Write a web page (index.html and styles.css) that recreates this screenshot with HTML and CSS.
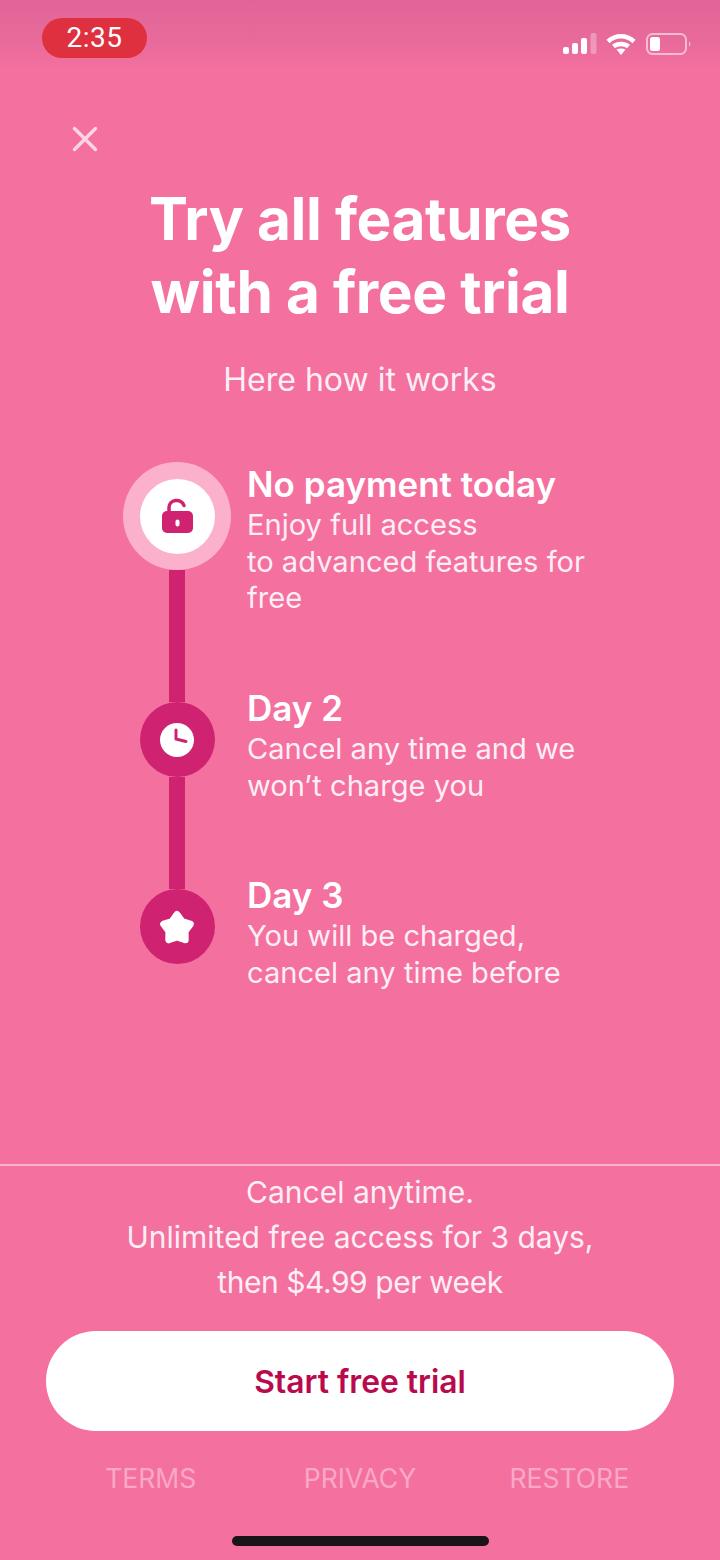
FILE: index.html
```html
<!DOCTYPE html>
<html lang="en">
<head>
<meta charset="utf-8">
<title>Free trial</title>
<link rel="stylesheet" href="styles.css">
</head>
<body>
<main class="page">
  <header class="status">
    <div class="time">2:35</div>
    <div class="status-icons">
      <svg class="signal" width="34" height="22" viewBox="0 0 34 22">
        <rect x="0" y="14" width="6" height="7" rx="2" fill="#fff"/>
        <rect x="9" y="10" width="6" height="11" rx="2" fill="#fff"/>
        <rect x="18" y="5" width="6" height="16" rx="2" fill="#fff"/>
        <rect x="27.500" y="0" width="6" height="21" rx="2" fill="#fff" opacity=".3"/>
      </svg>
      <svg class="wifi" width="30" height="22" viewBox="0 0 30 22" fill="none" stroke="#fff" stroke-width="4.500">
        <path d="M2 8.500C9.500 1.500 20.500 1.500 28 8.500"/>
        <path d="M7.500 13.500C11.500 10 18.500 10 22.500 13.500"/>
        <path d="M10.500 16.500L15 22L19.500 16.500C16.500 15 13.500 15 10.500 16.500Z" fill="#fff" stroke="none"/>
      </svg>
      <svg class="battery" width="46" height="22" viewBox="0 0 46 22">
        <rect x="1" y="1" width="39" height="20" rx="5.500" fill="none" stroke="#fff" stroke-opacity=".55" stroke-width="2"/>
        <rect x="4" y="4" width="10" height="14" rx="2.500" fill="#fff"/>
        <path d="M43 8.500C45 9.500 45 12.500 43 13.500Z" fill="#fff" fill-opacity=".55"/>
      </svg>
    </div>
  </header>

  <button class="close" type="button" aria-label="Close">
    <svg width="26" height="26" viewBox="0 0 26 26" stroke="#fcd5e4" stroke-width="3.500" stroke-linecap="round">
      <path d="M2.500 2.500L23.500 23.500M23.500 2.500L2.500 23.500"/>
    </svg>
  </button>

  <h1 class="title">Try all features<br>with a free trial</h1>
  <p class="subtitle">Here how it works</p>

  <ol class="steps">
    <li class="step step-first">
      <div class="track">
        <div class="halo">
          <div class="disc">
            <svg width="40" height="40" viewBox="0 0 40 40">
              <path d="M12 16V11.500C12 3.500 24 1.500 27 9.500" fill="none" stroke="#cf2270" stroke-width="3.500" stroke-linecap="round"/>
              <rect x="5" y="15" width="31" height="22" rx="5" fill="#cf2270"/>
              <rect x="18.500" y="23.500" width="4" height="7" rx="2" fill="#fff"/>
            </svg>
          </div>
        </div>
        <div class="bar"></div>
      </div>
      <div class="copy copy-first">
        <h2>No payment today</h2>
        <p>Enjoy full access<br>to advanced features for<br>free</p>
      </div>
    </li>
    <li class="step step-second">
      <div class="track">
        <div class="node">
          <svg width="36" height="36" viewBox="0 0 36 36">
            <circle cx="18" cy="18" r="17" fill="#fff"/>
            <path d="M17 8V17L27 19.500" fill="none" stroke="#cf2270" stroke-width="3" stroke-linecap="round" stroke-linejoin="round"/>
          </svg>
        </div>
        <div class="bar"></div>
      </div>
      <div class="copy">
        <h2>Day 2</h2>
        <p>Cancel any time and we<br>won’t charge you</p>
      </div>
    </li>
    <li class="step">
      <div class="track">
        <div class="node">
          <svg width="40" height="40" viewBox="0 -1.500 40 40">
            <path d="M20 6L25 13.100L33.300 15.700L28.100 22.600L28.200 31.300L20 28.500L11.800 31.300L11.900 22.600L6.700 15.700L15 13.100Z" fill="#fff" stroke="#fff" stroke-width="7" stroke-linejoin="round"/>
          </svg>
        </div>
      </div>
      <div class="copy">
        <h2>Day 3</h2>
        <p>You will be charged,<br>cancel any time before</p>
      </div>
    </li>
  </ol>

  <footer class="footer">
    <p class="terms">Cancel anytime.<br>Unlimited free access for 3 days,<br><span class="price">then $4.99 per week</span></p>
    <button class="cta" type="button">Start free trial</button>
    <nav class="links">
      <a>TERMS</a>
      <a>PRIVACY</a>
      <a>RESTORE</a>
    </nav>
    <div class="home"></div>
  </footer>
</main>
</body>
</html>
```

FILE: styles.css
```css
* {
  box-sizing: border-box;
}

html,
body {
  margin: 0;
  padding: 0;
}

body {
  font-family: "Inter", "Liberation Sans", sans-serif;
  color: #fff;
}

.page {
  width: 720px;
  height: 1560px;
  overflow: hidden;
  display: flex;
  flex-direction: column;
  background: linear-gradient(180deg, #e06596 0, #e76a9b 40px, #f4709f 70px, #f4709f 100%);
}

.status {
  height: 70px;
  padding: 18px 28px 0 42px;
  display: flex;
  justify-content: space-between;
  align-items: flex-start;
}

.time {
  width: 105px;
  height: 40px;
  border-radius: 20px;
  background: #de303f;
  font-family: "Roboto", sans-serif;
  font-size: 28px;
  line-height: 39px;
  letter-spacing: 0.5px;
  text-align: center;
  color: #fff;
}

.status-icons {
  display: flex;
  align-items: flex-end;
  height: 37px;
}

.signal {
  margin-right: 9px;
}

.wifi {
  margin-right: 10px;
}

.close {
  align-self: flex-start;
  width: 26px;
  height: 26px;
  margin: 56px 0 0 72px;
  padding: 0;
  border: 0;
  background: none;
}

.close svg {
  display: block;
}

.title {
  margin: 30px 0 0;
  font-size: 58.500px;
  line-height: 73px;
  font-weight: 700;
  text-align: center;
  letter-spacing: -0.4px;
}

.subtitle {
  margin: 32px 0 0;
  font-size: 32px;
  line-height: 40px;
  font-weight: 400;
  text-align: center;
  color: #fdeef4;
}

.steps {
  list-style: none;
  margin: 62px 0 0 123px;
  padding: 0;
}

.step {
  display: flex;
  gap: 16px;
}

.step-first {
  height: 240px;
}

.step-second {
  height: 187px;
}

.track {
  width: 108px;
  flex: none;
  display: flex;
  flex-direction: column;
  align-items: center;
}

.halo {
  width: 108px;
  height: 108px;
  flex: none;
  border-radius: 50%;
  background: #fbb0cc;
  display: flex;
  align-items: center;
  justify-content: center;
}

.disc {
  width: 75px;
  height: 75px;
  border-radius: 50%;
  background: #fff;
  display: flex;
  align-items: center;
  justify-content: center;
}

.node {
  width: 75px;
  height: 75px;
  flex: none;
  border-radius: 50%;
  background: #cf2270;
  display: flex;
  align-items: center;
  justify-content: center;
}

.bar {
  width: 16px;
  flex: 1;
  background: #cf2270;
}

.copy {
  margin-top: -13px;
}

.copy-first {
  margin-top: 3px;
}

.copy h2 {
  margin: 0;
  font-size: 35px;
  line-height: 38px;
  font-weight: 600;
  color: #fff;
}

.copy p {
  margin: 4px 0 0;
  font-size: 29.100px;
  line-height: 36.500px;
  font-weight: 400;
  color: #fdeef4;
}

.footer {
  margin-top: auto;
  border-top: 2px solid #fbb0cc;
  display: flex;
  flex-direction: column;
  align-items: center;
  height: 396px;
}

.terms {
  margin: 4px 0 0;
  font-size: 30px;
  line-height: 45px;
  text-align: center;
  color: #fdeef4;
}

.price {
  letter-spacing: -0.45px;
}

.cta {
  width: 628px;
  height: 100px;
  margin-top: 26px;
  border: 0;
  border-radius: 50px;
  background: #fff;
  font-family: inherit;
  font-size: 31.800px;
  font-weight: 600;
  color: #b80a4c;
}

.links {
  width: 628px;
  margin-top: 27px;
  display: grid;
  grid-template-columns: repeat(3, 1fr);
  text-align: center;
  font-size: 26.500px;
  line-height: 40px;
  color: #fba8c6;
}

.home {
  width: 257px;
  height: 10px;
  margin-top: 38px;
  border-radius: 5px;
  background: #1a1418;
}
```
